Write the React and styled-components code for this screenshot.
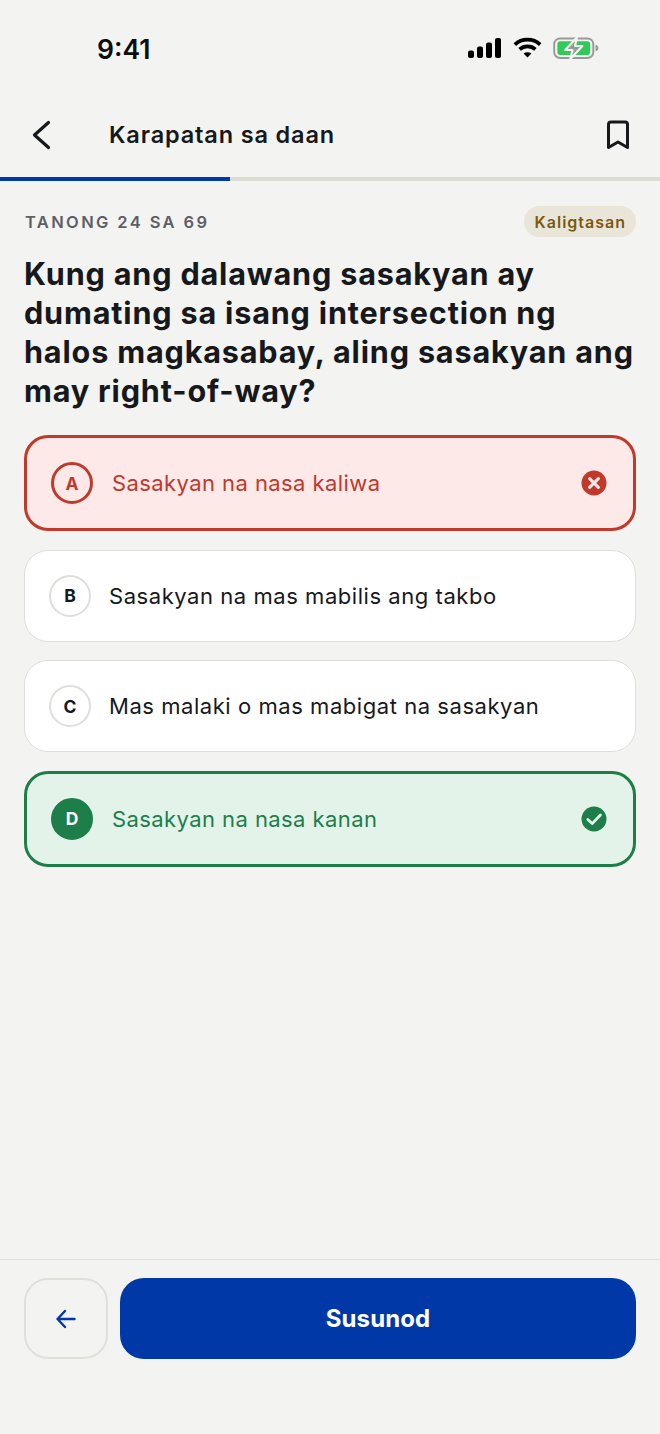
import React from "react";
import styled, { createGlobalStyle } from "styled-components";

const Global = createGlobalStyle`
  html, body { margin: 0; padding: 0; background: #f3f3f1; }
  * { box-sizing: border-box; }
`;

const Page = styled.div`
  width: 660px;
  height: 1434px;
  background: #f3f3f1;
  display: flex;
  flex-direction: column;
  font-family: Inter, "Liberation Sans", sans-serif;
  color: #16181b;
`;

const StatusBar = styled.div`
  height: 97px;
  padding: 32px 61px 0 97px;
  display: flex;
  justify-content: space-between;
  align-items: flex-start;
`;

const Clock = styled.div`
  font-size: 26.5px;
  line-height: 34px;
  font-weight: 600;
  color: #0c0c0c;
`;

const StatusIcons = styled.div`
  display: flex;
  align-items: center;
  gap: 11px;
  padding-top: 4px;
`;

const Header = styled.header`
  height: 80px;
  padding: 0 30px 4px 30px;
  display: flex;
  align-items: center;
`;

const BackGlyph = styled.svg`
  width: 24px;
  height: 34px;
  flex: none;
`;

const HeaderTitle = styled.h1`
  flex: 1;
  margin: 0 0 0 55px;
  font-size: 23.5px;
  line-height: 30px;
  font-weight: 600;
  letter-spacing: 0.85px;
`;

const Progress = styled.div`
  height: 4px;
  background: #dcdcd3;
`;

const ProgressFill = styled.div`
  height: 100%;
  background: #0038a8;
`;

const Main = styled.main`
  flex: 1;
  padding: 25px 24px 0 24px;
`;

const MetaRow = styled.div`
  display: flex;
  justify-content: space-between;
  align-items: center;
  height: 31px;
`;

const Counter = styled.div`
  padding-left: 1px;
  font-size: 16.5px;
  font-weight: 600;
  letter-spacing: 2.38px;
  color: #5c5f66;
`;

const Tag = styled.div`
  height: 31px;
  padding: 0 10px 0 11px;
  border-radius: 16px;
  background: #e9e5d8;
  color: #7a5a10;
  font-size: 16px;
  font-weight: 600;
  letter-spacing: 1px;
  display: flex;
  align-items: center;
`;

const Question = styled.h2`
  margin: 17px 0 25px;
  font-size: 30.6px;
  line-height: 39px;
  font-weight: 700;
  letter-spacing: 0.82px;
  color: #16181b;
`;

const Options = styled.div`
  display: flex;
  flex-direction: column;
  gap: 18.6px;
`;

const tones = {
  neutral: { bg: "#ffffff", border: "#dededb", text: "#16181b", width: 1.8, height: 92, pad: 24, gap: 18, ring: 2.5, track: 0.55 },
  wrong: { bg: "#fce9e8", border: "#c0392b", text: "#c0392b", width: 3, height: 96, pad: 24, gap: 19, ring: 3, track: 0.42 },
  right: { bg: "#e4f3e9", border: "#1e7e4a", text: "#1e7e4a", width: 3, height: 96, pad: 24, gap: 19, ring: 3, track: 0.42 },
};

const Option = styled.div`
  display: flex;
  align-items: center;
  height: ${(p) => tones[p.$tone].height}px;
  padding: 0 26px 0 ${(p) => tones[p.$tone].pad}px;
  gap: ${(p) => tones[p.$tone].gap}px;
  background: ${(p) => tones[p.$tone].bg};
  border: ${(p) => tones[p.$tone].width}px solid ${(p) => tones[p.$tone].border};
  border-radius: 24px;
  color: ${(p) => tones[p.$tone].text};
`;

const Letter = styled.div`
  flex: none;
  width: 42px;
  height: 42px;
  border-radius: 50%;
  display: flex;
  align-items: center;
  justify-content: center;
  font-size: 17.5px;
  font-weight: 700;
  border: ${(p) => tones[p.$tone].ring}px solid ${(p) => tones[p.$tone].border};
  background: ${(p) => (p.$tone === "right" ? tones.right.border : p.$tone === "wrong" ? "transparent" : "#fff")};
  color: ${(p) => (p.$tone === "right" ? "#fff" : p.$tone === "wrong" ? tones.wrong.border : "#16181b")};
`;

const OptionText = styled.div`
  flex: 1;
  font-size: 22px;
  line-height: 30px;
  letter-spacing: ${(p) => tones[p.$tone].track}px;
`;

const Footer = styled.footer`
  height: 175px;
  border-top: 1.5px solid #dededa;
  padding: 18px 24px 0;
  display: flex;
  gap: 12px;
  align-items: flex-start;
`;

const BackButton = styled.button`
  flex: none;
  width: 84px;
  height: 81px;
  border: 2.5px solid #e0e0db;
  border-radius: 24px;
  background: #f3f3f1;
  display: flex;
  align-items: center;
  justify-content: center;
  padding: 0;
`;

const NextButton = styled.button`
  flex: 1;
  height: 81px;
  border: 0;
  border-radius: 24px;
  background: #0038a8;
  color: #fff;
  font-family: inherit;
  font-size: 24px;
  font-weight: 700;
  letter-spacing: 0.1px;
`;

const SignalIcon = () => (
  <svg width="34" height="20" viewBox="0 0 34 20" fill="#000">
    <rect x="0" y="12.5" width="6" height="7.5" rx="2" />
    <rect x="9" y="8.5" width="6" height="11.5" rx="2" />
    <rect x="18" y="4.5" width="6" height="15.5" rx="2" />
    <rect x="27" y="0" width="6" height="20" rx="2" />
  </svg>
);

const WifiIcon = () => (
  <svg width="29" height="22" viewBox="0 0 29 22" fill="none" stroke="#000" strokeWidth="3.6">
    <path d="M1.8 7.6 C8.8 1 20.2 1 27.2 7.6" />
    <path d="M6.6 12.4 C11 8.4 18 8.4 22.4 12.4" />
    <path d="M14.5 20.6 L10.6 16.6 C12.8 14.9 16.2 14.9 18.4 16.6 Z" fill="#000" stroke="none" />
  </svg>
);

const BatteryIcon = () => (
  <svg width="46" height="24" viewBox="0 0 47 24">
    <rect x="1.2" y="2.2" width="40" height="20" rx="6" fill="none" stroke="#9a9a9a" strokeWidth="2" />
    <rect x="4.5" y="5.2" width="33.5" height="14" rx="3" fill="#34c759" />
    <path d="M43.5 8.6 C45.6 9.2 46.4 10.5 46.4 12 C46.4 13.5 45.6 14.8 43.5 15.4 Z" fill="#9a9a9a" />
    <path d="M24.5 1 L12.5 14 H20 L17.5 23.5 L30 10 H22.5 Z" fill="#9a9a9a" stroke="#f3f3f1" strokeWidth="2.2" strokeLinejoin="round" />
  </svg>
);

const Bookmark = () => (
  <svg width="24" height="30" viewBox="0 0 24 30" fill="none" stroke="#16181b" strokeWidth="3" strokeLinejoin="round">
    <path d="M2.5 27.5 V4.5 Q2.5 2 5 2 H19 Q21.5 2 21.5 4.5 V27.5 L12 22 Z" />
  </svg>
);

const WrongMark = () => (
  <svg width="26" height="26" viewBox="0 0 26 26">
    <circle cx="13" cy="13" r="12.5" fill="#c0392b" />
    <path d="M8.6 8.6 L17.4 17.4 M17.4 8.6 L8.6 17.4" stroke="#fce9e8" strokeWidth="3" strokeLinecap="round" />
  </svg>
);

const RightMark = () => (
  <svg width="26" height="26" viewBox="0 0 26 26" fill="none">
    <circle cx="13" cy="13" r="12.5" fill="#1e7e4a" />
    <path d="M6.8 13.4 L11.2 17.6 L19.4 9" stroke="#e4f3e9" strokeWidth="2.8" strokeLinecap="round" strokeLinejoin="round" />
  </svg>
);

const options = [
  { letter: "A", text: "Sasakyan na nasa kaliwa", tone: "wrong", mark: <WrongMark /> },
  { letter: "B", text: "Sasakyan na mas mabilis ang takbo", tone: "neutral" },
  { letter: "C", text: "Mas malaki o mas mabigat na sasakyan", tone: "neutral" },
  { letter: "D", text: "Sasakyan na nasa kanan", tone: "right", mark: <RightMark /> },
];

export default function App() {
  return (
    <Page>
      <Global />
      <StatusBar>
        <Clock>9:41</Clock>
        <StatusIcons>
          <SignalIcon />
          <WifiIcon />
          <BatteryIcon />
        </StatusIcons>
      </StatusBar>
      <Header>
        <BackGlyph viewBox="0 0 24 34" fill="none" stroke="#16181b" strokeWidth="3.2" strokeLinecap="round" strokeLinejoin="round">
          <path d="M18.5 4.5 L4.5 17 L18.5 29.5" />
        </BackGlyph>
        <HeaderTitle>Karapatan sa daan</HeaderTitle>
        <Bookmark />
      </Header>
      <Progress>
        <ProgressFill style={{ width: `${(24 / 69) * 100}%` }} />
      </Progress>
      <Main>
        <MetaRow>
          <Counter>TANONG 24 SA 69</Counter>
          <Tag>Kaligtasan</Tag>
        </MetaRow>
        <Question>
          Kung ang dalawang sasakyan ay dumating sa isang intersection ng halos magkasabay, aling sasakyan ang may right-of-way?
        </Question>
        <Options>
          {options.map((o) => (
            <Option key={o.letter} $tone={o.tone}>
              <Letter $tone={o.tone}>{o.letter}</Letter>
              <OptionText $tone={o.tone}>{o.text}</OptionText>
              {o.mark}
            </Option>
          ))}
        </Options>
      </Main>
      <Footer>
        <BackButton aria-label="Bumalik">
          <svg width="24" height="24" viewBox="0 0 24 24" fill="none" stroke="#0038a8" strokeWidth="2.4" strokeLinecap="round" strokeLinejoin="round">
            <path d="M20.5 12 H3.5 M11 4 L3.5 12 L11 20" />
          </svg>
        </BackButton>
        <NextButton>Susunod</NextButton>
      </Footer>
    </Page>
  );
}
